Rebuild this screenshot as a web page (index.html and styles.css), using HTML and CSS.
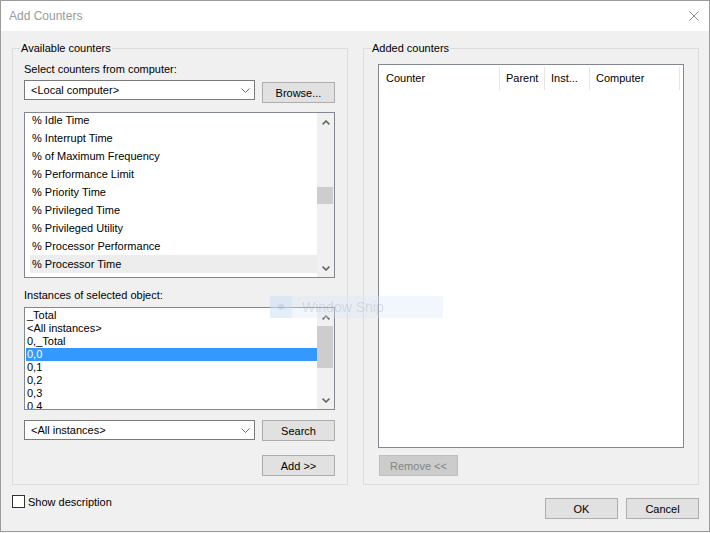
FILE: index.html
```html
<!DOCTYPE html>
<html>
<head>
<meta charset="utf-8">
<title>Add Counters</title>
<link rel="stylesheet" href="styles.css">
</head>
<body>
<div class="window">
  <div class="titlebar">
    <span class="title">Add Counters</span>
    <svg class="close" width="10" height="10" viewBox="0 0 10 10"><path d="M0.5 0.5L9.5 9.5M9.5 0.5L0.5 9.5" stroke="#8a8a8a" stroke-width="1" fill="none"/></svg>
  </div>
  <div class="content">
    <div class="groups">
      <fieldset class="group group-left">
        <legend>Available counters</legend>
        <div class="label label-computer">Select counters from computer:</div>
        <div class="row row-computer">
          <div class="combo"><span>&lt;Local computer&gt;</span><svg class="chev" width="9" height="5" viewBox="0 0 9 5"><path d="M0.5 0.5L4.5 4.5L8.5 0.5" stroke="#6f6f6f" fill="none"/></svg></div>
          <div class="btn btn-offset">Browse...</div>
        </div>
        <div class="listbox counters">
          <ul class="items counter-items">
            <li>% Idle Time</li>
            <li>% Interrupt Time</li>
            <li>% of Maximum Frequency</li>
            <li>% Performance Limit</li>
            <li>% Priority Time</li>
            <li>% Privileged Time</li>
            <li>% Privileged Utility</li>
            <li>% Processor Performance</li>
            <li class="hover">% Processor Time</li>
          </ul>
          <div class="vscroll">
            <div class="sb-btn sb-up"><svg width="8" height="5" viewBox="0 0 8 5"><path d="M0.6 4.4L4 1L7.4 4.4" stroke="#606060" stroke-width="1.5" fill="none"/></svg></div>
            <div class="sb-track"><div class="thumb thumb-counters"></div></div>
            <div class="sb-btn"><svg width="8" height="5" viewBox="0 0 8 5"><path d="M0.6 0.6L4 4L7.4 0.6" stroke="#606060" stroke-width="1.5" fill="none"/></svg></div>
          </div>
        </div>
        <div class="label label-instances">Instances of selected object:</div>
        <div class="listbox instances">
          <ul class="items instance-items">
            <li>_Total</li>
            <li>&lt;All instances&gt;</li>
            <li>0,_Total</li>
            <li class="selected">0,0</li>
            <li>0,1</li>
            <li>0,2</li>
            <li>0,3</li>
            <li>0,4</li>
          </ul>
          <div class="vscroll">
            <div class="sb-btn sb-up"><svg width="8" height="5" viewBox="0 0 8 5"><path d="M0.6 4.4L4 1L7.4 4.4" stroke="#606060" stroke-width="1.5" fill="none"/></svg></div>
            <div class="sb-track"><div class="thumb thumb-instances"></div></div>
            <div class="sb-btn"><svg width="8" height="5" viewBox="0 0 8 5"><path d="M0.6 0.6L4 4L7.4 0.6" stroke="#606060" stroke-width="1.5" fill="none"/></svg></div>
          </div>
        </div>
        <div class="row row-instances">
          <div class="combo"><span>&lt;All instances&gt;</span><svg class="chev" width="9" height="5" viewBox="0 0 9 5"><path d="M0.5 0.5L4.5 4.5L8.5 0.5" stroke="#6f6f6f" fill="none"/></svg></div>
          <div class="btn">Search</div>
        </div>
        <div class="row row-add">
          <div class="btn">Add &gt;&gt;</div>
        </div>
      </fieldset>
      <fieldset class="group group-right">
        <legend>Added counters</legend>
        <div class="listview">
          <div class="lv-header">
            <div class="col col-counter">Counter</div>
            <div class="col col-parent">Parent</div>
            <div class="col col-inst">Inst...</div>
            <div class="col col-computer">Computer</div>
          </div>
        </div>
        <div class="btn btn-disabled">Remove &lt;&lt;</div>
      </fieldset>
    </div>
    <div class="footer">
      <label class="check"><span class="box"></span><span>Show description</span></label>
      <div class="dlg-buttons">
        <div class="btn">OK</div>
        <div class="btn">Cancel</div>
      </div>
    </div>
  </div>
</div>
<div class="snip"><div class="snip-icon"><span class="dot"></span></div><span class="snip-text">Window Snip</span></div>
</body>
</html>
```
FILE: styles.css
```css
* { box-sizing: border-box; }
html, body { margin: 0; padding: 0; }
body {
  width: 710px;
  height: 533px;
  background: #f7f7f7;
  font-family: "Liberation Sans", Arial, sans-serif;
  font-size: 11px;
  color: #000;
  overflow: hidden;
  position: relative;
}
.window {
  width: 710px;
  height: 532px;
  border: 1px solid #9b9b9b;
  background: #f0f0f0;
  display: flex;
  flex-direction: column;
}
.titlebar {
  height: 30px;
  flex: none;
  background: #fff;
  display: flex;
  align-items: center;
  justify-content: space-between;
  padding: 0 10px 0 8px;
}
.title { color: #9a9a9a; line-height: 16px; font-size: 12px; }
.close { margin-top: -1px; }
.content { padding: 9px 10px 0 11px; }
.groups {
  display: grid;
  grid-template-columns: 336px 336px;
  column-gap: 15px;
}
.group {
  margin: 0;
  min-width: 0;
  border: 1px solid #dcdcdc;
  padding: 0 12px 8px 11px;
}
.group-right { padding: 0 14px 8px 14px; }
legend {
  padding: 0 1px;
  margin-left: -4px;
  line-height: 16px;
}
.group-right legend { margin-left: -7px; }
.label { line-height: 14px; }
.label-computer { margin-top: 6px; }
.label-instances { margin-top: 10px; }
.row { display: flex; justify-content: space-between; align-items: flex-start; }
.row-computer { margin-top: 4px; }
.row-instances { margin-top: 10px; }
.row-add { margin-top: 14px; justify-content: flex-end; }
.combo {
  width: 231px;
  height: 20px;
  border: 1px solid #7a7a7a;
  background: #fff;
  display: flex;
  align-items: center;
  justify-content: space-between;
  padding: 0 4px 0 6px;
}
.btn {
  width: 73px;
  height: 21px;
  border: 1px solid #adadad;
  background: #e1e1e1;
  display: flex;
  align-items: center;
  justify-content: center;
}
.btn-offset { margin-top: 2px; }
.listbox {
  border: 1px solid #828790;
  background: #fff;
  display: flex;
  overflow: hidden;
}
.counters { margin-top: 9px; height: 166px; }
.instances { margin-top: 5px; height: 103px; }
.items {
  flex: 1;
  list-style: none;
  margin: 0;
  padding: 0;
  overflow: hidden;
}
.counter-items { margin-top: -2px; padding-left: 5px; }
.counter-items li { height: 18px; line-height: 18px; padding-left: 2px; white-space: nowrap; }
.counter-items li.hover { background: #ededed; }
.instance-items { margin-top: 1px; padding-left: 1px; }
.instance-items li { height: 13px; line-height: 13px; padding-left: 1px; white-space: nowrap; }
.instance-items li.selected { background: #3399ff; color: #fff; }
.vscroll {
  width: 17px;
  flex: none;
  background: #f0f0f0;
  display: flex;
  flex-direction: column;
}
.sb-btn {
  height: 17px;
  flex: none;
  display: flex;
  align-items: center;
  justify-content: center;
}
.sb-up { padding-top: 2px; }
.sb-track { flex: 1; }
.thumb { width: 16px; background: #cdcdcd; }
.thumb-counters { margin-top: 57px; height: 17px; }
.thumb-instances { margin-top: 1px; height: 42px; }
.listview {
  margin-top: 8px;
  height: 384px;
  border: 1px solid #828790;
  background: #fff;
}
.lv-header { display: flex; padding-top: 2px; }
.col {
  height: 23px;
  line-height: 23px;
  border-right: 1px solid #e5e5e5;
  padding-left: 6px;
  white-space: nowrap;
  overflow: hidden;
}
.col-counter { width: 121px; padding-left: 7px; }
.col-parent { width: 45px; }
.col-inst { width: 45px; }
.col-computer { width: 90px; }
.btn-disabled {
  margin-top: 7px;
  margin-left: 1px;
  width: 79px;
  background: #cccccc;
  border-color: #bfbfbf;
  color: #838383;
}
.footer { display: flex; justify-content: space-between; align-items: flex-start; }
.check { display: flex; align-items: center; margin-top: 10px; }
.box {
  width: 13px;
  height: 13px;
  border: 1px solid #333;
  background: #fff;
  margin-right: 3px;
}
.dlg-buttons { display: flex; gap: 8px; margin-top: 13px; }
.snip {
  position: absolute;
  left: 270px;
  top: 296px;
  width: 173px;
  height: 22px;
  background: rgba(215, 232, 250, 0.35);
  display: flex;
  align-items: center;
}
.snip-icon {
  width: 22px;
  height: 22px;
  background: rgba(200, 220, 245, 0.35);
  display: flex;
  align-items: center;
  justify-content: center;
}
.dot { width: 6px; height: 6px; border-radius: 50%; background: rgba(150, 160, 175, 0.25); }
.snip-text { margin-left: 10px; font-size: 14px; color: rgba(130, 130, 150, 0.22); }
```
